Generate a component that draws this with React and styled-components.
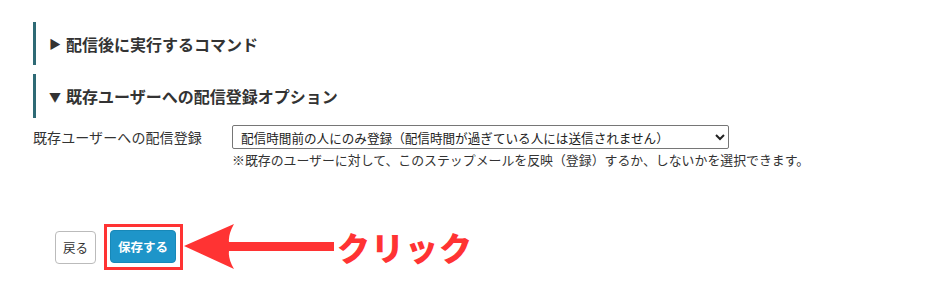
import React from "react";
import styled, { createGlobalStyle } from "styled-components";

const Global = createGlobalStyle`
  html, body { margin: 0; padding: 0; background: #fff; }
  body { font-family: "Noto Sans CJK JP", "Noto Sans", sans-serif; color: #333; }
`;

const Page = styled.div`
  padding: 22px 0 0 33px;
  width: 918px;
`;

const SectionHeading = styled.h3`
  margin: 0 0 ${(p) => p.$gap || 0}px 0;
  height: ${(p) => p.$h}px;
  border-left: 3px solid #2e6a75;
  padding-left: 13px;
  display: flex;
  align-items: center;
  font-size: 16px;
  font-weight: 700;
  color: #333;
`;

const Marker = styled.span`
  font-size: 12px;
  width: 17px;
  color: #333;
  display: inline-block;
`;

const FormRow = styled.div`
  display: grid;
  grid-template-columns: 199px 497px;
  margin-top: 7px;
`;

const Label = styled.div`
  font-size: 14px;
  line-height: 24px;
  color: #333;
  letter-spacing: 0.1px;
`;

const Field = styled.div`
  display: flex;
  flex-direction: column;
`;

const Select = styled.select`
  width: 497px;
  height: 24px;
  font-family: "Noto Sans CJK JP", sans-serif;
  font-size: 12.6px;
  color: #222;
  border: 1px solid #767676;
  border-radius: 2px;
  padding: 0 4px;
  background: #fff;
`;

const Note = styled.p`
  margin: 2px 0 0 0;
  font-size: 12.9px;
  line-height: 18px;
  color: #333;
  white-space: nowrap;
`;

const Actions = styled.div`
  display: flex;
  align-items: center;
  margin-top: 55px;
  margin-left: 22px;
`;

const Button = styled.button`
  font-family: "Noto Sans CJK JP", sans-serif;
  height: 33px;
  border-radius: 4px;
  font-size: 12.5px;
  cursor: pointer;
  padding: 0;
  ${(p) =>
    p.$primary
      ? `
    width: 66px;
    background: #1e95c9;
    border: 1px solid #1788b8;
    color: #fff;
    font-weight: 700;
  `
      : `
    width: 41px;
    background: #fff;
    border: 1px solid #bbb;
    color: #333;
  `}
`;

const Highlight = styled.div`
  margin-left: 8px;
  border: 3px solid #ff3333;
  padding: 3px 4px 4px 3px;
  display: flex;
`;

const Callout = styled.div`
  display: flex;
  align-items: center;
  margin-left: 1px;
`;

const CalloutText = styled.span`
  font-size: 33px;
  font-weight: 900;
  color: #ff3333;
  margin-left: 3px;
  letter-spacing: 1px;
  line-height: 44px;
`;

export default function App() {
  return (
    <Page>
      <Global />
      <SectionHeading $h={43} $gap={9}>
        <Marker>▶</Marker>配信後に実行するコマンド
      </SectionHeading>
      <SectionHeading $h={44}>
        <Marker>▼</Marker>既存ユーザーへの配信登録オプション
      </SectionHeading>
      <FormRow>
        <Label>既存ユーザーへの配信登録</Label>
        <Field>
          <Select defaultValue="a">
            <option value="a">
              配信時間前の人にのみ登録（配信時間が過ぎている人には送信されません）
            </option>
            <option value="b">すべての人に登録</option>
            <option value="c">登録しない</option>
          </Select>
          <Note>
            ※既存のユーザーに対して、このステップメールを反映（登録）するか、しないかを選択できます。
          </Note>
        </Field>
      </FormRow>
      <Actions>
        <Button>戻る</Button>
        <Highlight>
          <Button $primary>保存する</Button>
        </Highlight>
        <Callout>
          <svg width="150" height="46" viewBox="0 0 150 46">
            <path
              d="M0 22 L50 0 Q44 11 45 18 L150 18 L150 27 L45 27 Q44 35 50 45 Z"
              fill="#ff3333"
            />
          </svg>
          <CalloutText>クリック</CalloutText>
        </Callout>
      </Actions>
    </Page>
  );
}
